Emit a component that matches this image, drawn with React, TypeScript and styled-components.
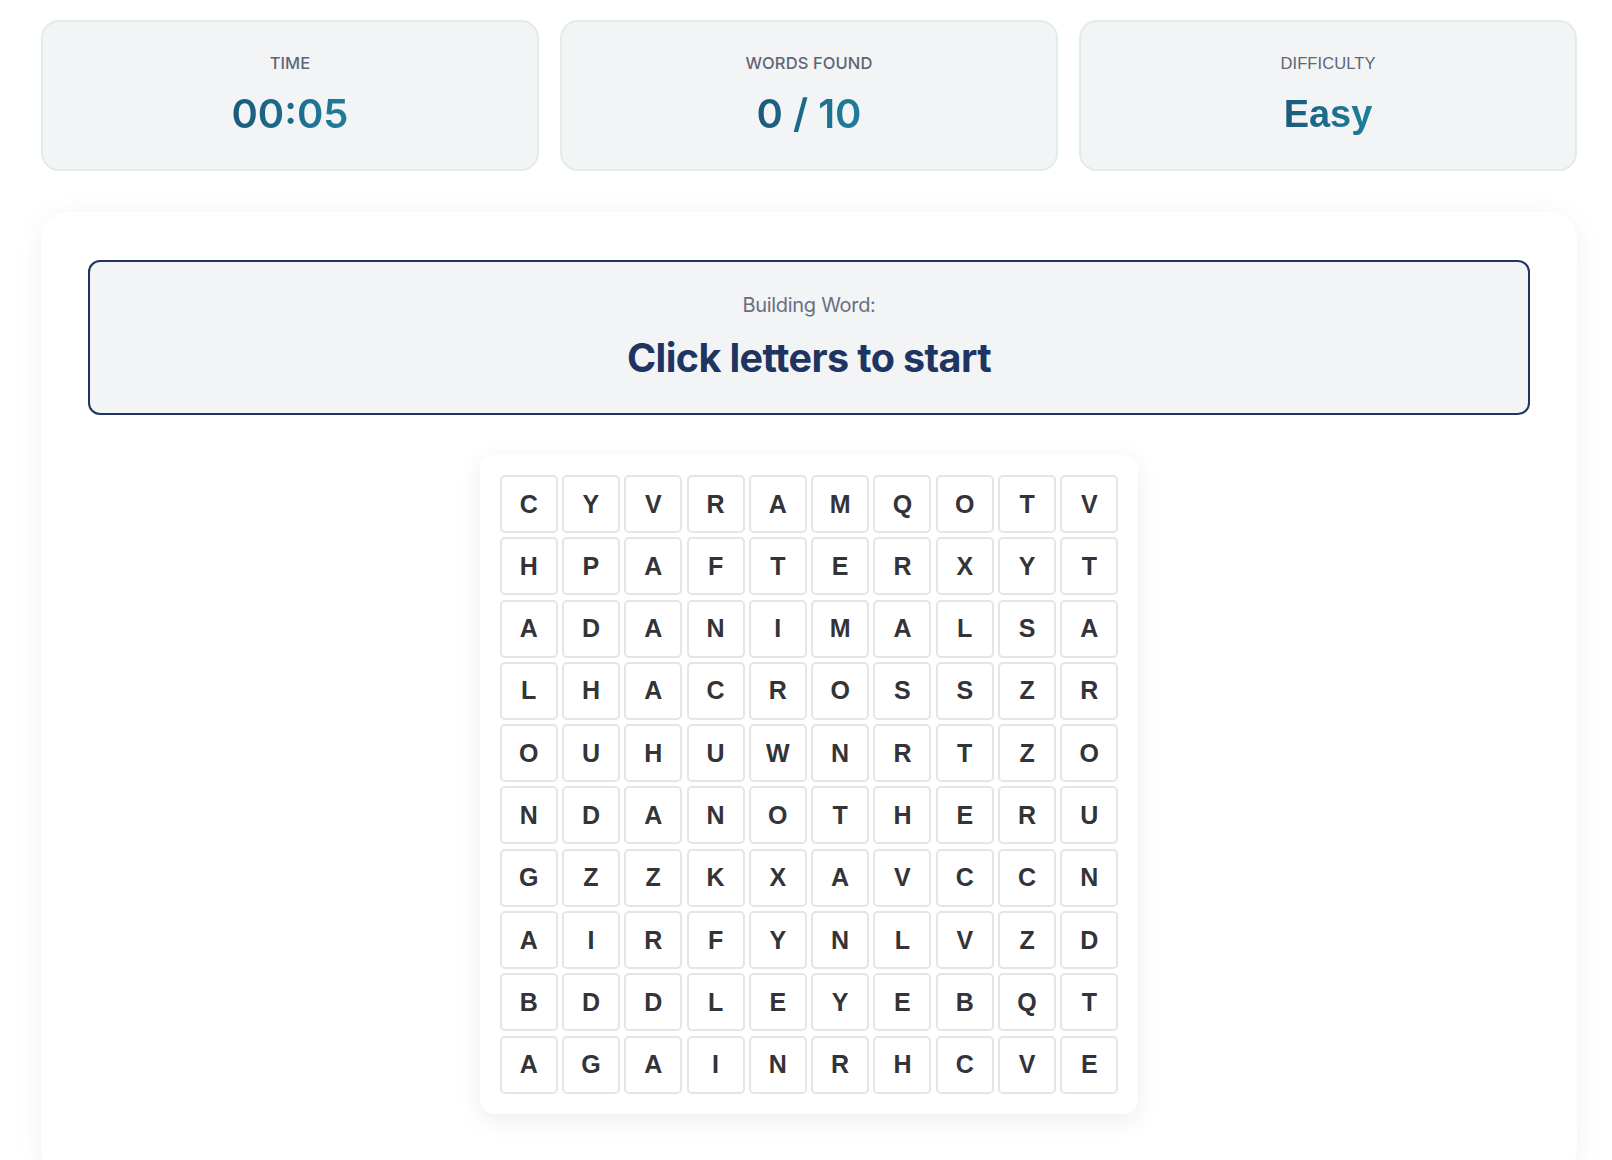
import React from "react";
import styled, { createGlobalStyle } from "styled-components";

const GlobalStyle = createGlobalStyle`
  * {
    box-sizing: border-box;
  }
  body {
    margin: 0;
    background: #ffffff;
    font-family: "Inter", "Liberation Sans", sans-serif;
    color: #1e3461;
  }
`;

const Page = styled.div`
  padding: 20px 35px 0 41px;
  display: flex;
  flex-direction: column;
  gap: 41px;
`;

const StatsRow = styled.div`
  display: grid;
  grid-template-columns: repeat(3, 1fr);
  gap: 21px;
`;

const StatCard = styled.div`
  height: 151px;
  background: #f3f4f6;
  border: 2px solid #e1ede8;
  border-radius: 18px;
  display: flex;
  flex-direction: column;
  align-items: center;
  padding-top: 30px;
`;

const StatLabel = styled.div<{ $font: string }>`
  font-family: ${(p) => p.$font};
  font-size: 16.5px;
  font-weight: 500;
  color: #5d6675;
  text-transform: uppercase;
  letter-spacing: 0.1px;
  line-height: 22px;
`;

const StatValue = styled.div<{ $font: string; $size: number }>`
  font-family: ${(p) => p.$font};
  margin-top: 16px;
  font-size: ${(p) => p.$size}px;
  font-weight: 600;
  line-height: 48px;
  background: linear-gradient(90deg, #1b5a7d 0%, #1d7f9b 100%);
  -webkit-background-clip: text;
  background-clip: text;
  color: transparent;
`;

const Board = styled.div`
  background: #ffffff;
  border-radius: 26px;
  box-shadow: 0 4px 28px rgba(0, 0, 0, 0.06);
  padding: 48px 47px 60px;
  display: flex;
  flex-direction: column;
  align-items: center;
  gap: 40px;
`;

const WordBox = styled.div`
  width: 100%;
  height: 155px;
  background: #f3f4f6;
  border: 2px solid #1e3461;
  border-radius: 12px;
  display: flex;
  flex-direction: column;
  align-items: center;
  padding-top: 30px;
`;

const WordLabel = styled.div`
  font-size: 20px;
  font-weight: 400;
  color: #687080;
  line-height: 26px;
  letter-spacing: -0.3px;
`;

const WordText = styled.div`
  margin-top: 16px;
  font-size: 39.5px;
  font-weight: 700;
  line-height: 48px;
  color: #1e3461;
  letter-spacing: -0.6px;
`;

const GridPanel = styled.div`
  background: #ffffff;
  border-radius: 14px;
  box-shadow: 0 6px 24px rgba(0, 0, 0, 0.08);
  padding: 20px;
`;

const LetterGrid = styled.div`
  display: grid;
  grid-template-columns: repeat(10, 58px);
  grid-auto-rows: 58px;
  gap: 4.3px;
`;

const Cell = styled.button`
  width: 58px;
  height: 58px;
  border: 2px solid #e2e5ea;
  border-radius: 5px;
  background: #ffffff;
  font-family: "Liberation Sans", Arial, sans-serif;
  font-size: 25px;
  font-weight: 700;
  color: #333338;
  display: flex;
  align-items: center;
  justify-content: center;
  padding: 0;
  cursor: pointer;
`;

const rows = [
  "CYVRAMQOTV",
  "HPAFTERXYT",
  "ADANIMALSA",
  "LHACROSSZR",
  "OUHUWNRTZO",
  "NDANOTHERU",
  "GZZKXAVCCN",
  "AIRFYNLVZD",
  "BDDLEYEBQT",
  "AGAINRHCVE",
];

const stats = [
  { label: "Time", value: "00:05", font: '"Inter", sans-serif', size: 40 },
  { label: "Words Found", value: "0 / 10", font: '"Inter", sans-serif', size: 40 },
  { label: "Difficulty", value: "Easy", font: '"Liberation Sans", Arial, sans-serif', size: 38 },
];

const App = () => {
  return (
    <>
      <GlobalStyle />
      <Page>
        <StatsRow>
          {stats.map((s) => (
            <StatCard key={s.label}>
              <StatLabel $font={s.font}>{s.label}</StatLabel>
              <StatValue $font={s.font} $size={s.size}>
                {s.value}
              </StatValue>
            </StatCard>
          ))}
        </StatsRow>
        <Board>
          <WordBox>
            <WordLabel>Building Word:</WordLabel>
            <WordText>Click letters to start</WordText>
          </WordBox>
          <GridPanel>
            <LetterGrid>
              {rows.map((row, r) =>
                row.split("").map((ch, c) => <Cell key={`${r}-${c}`}>{ch}</Cell>)
              )}
            </LetterGrid>
          </GridPanel>
        </Board>
      </Page>
    </>
  );
};

export default App;
